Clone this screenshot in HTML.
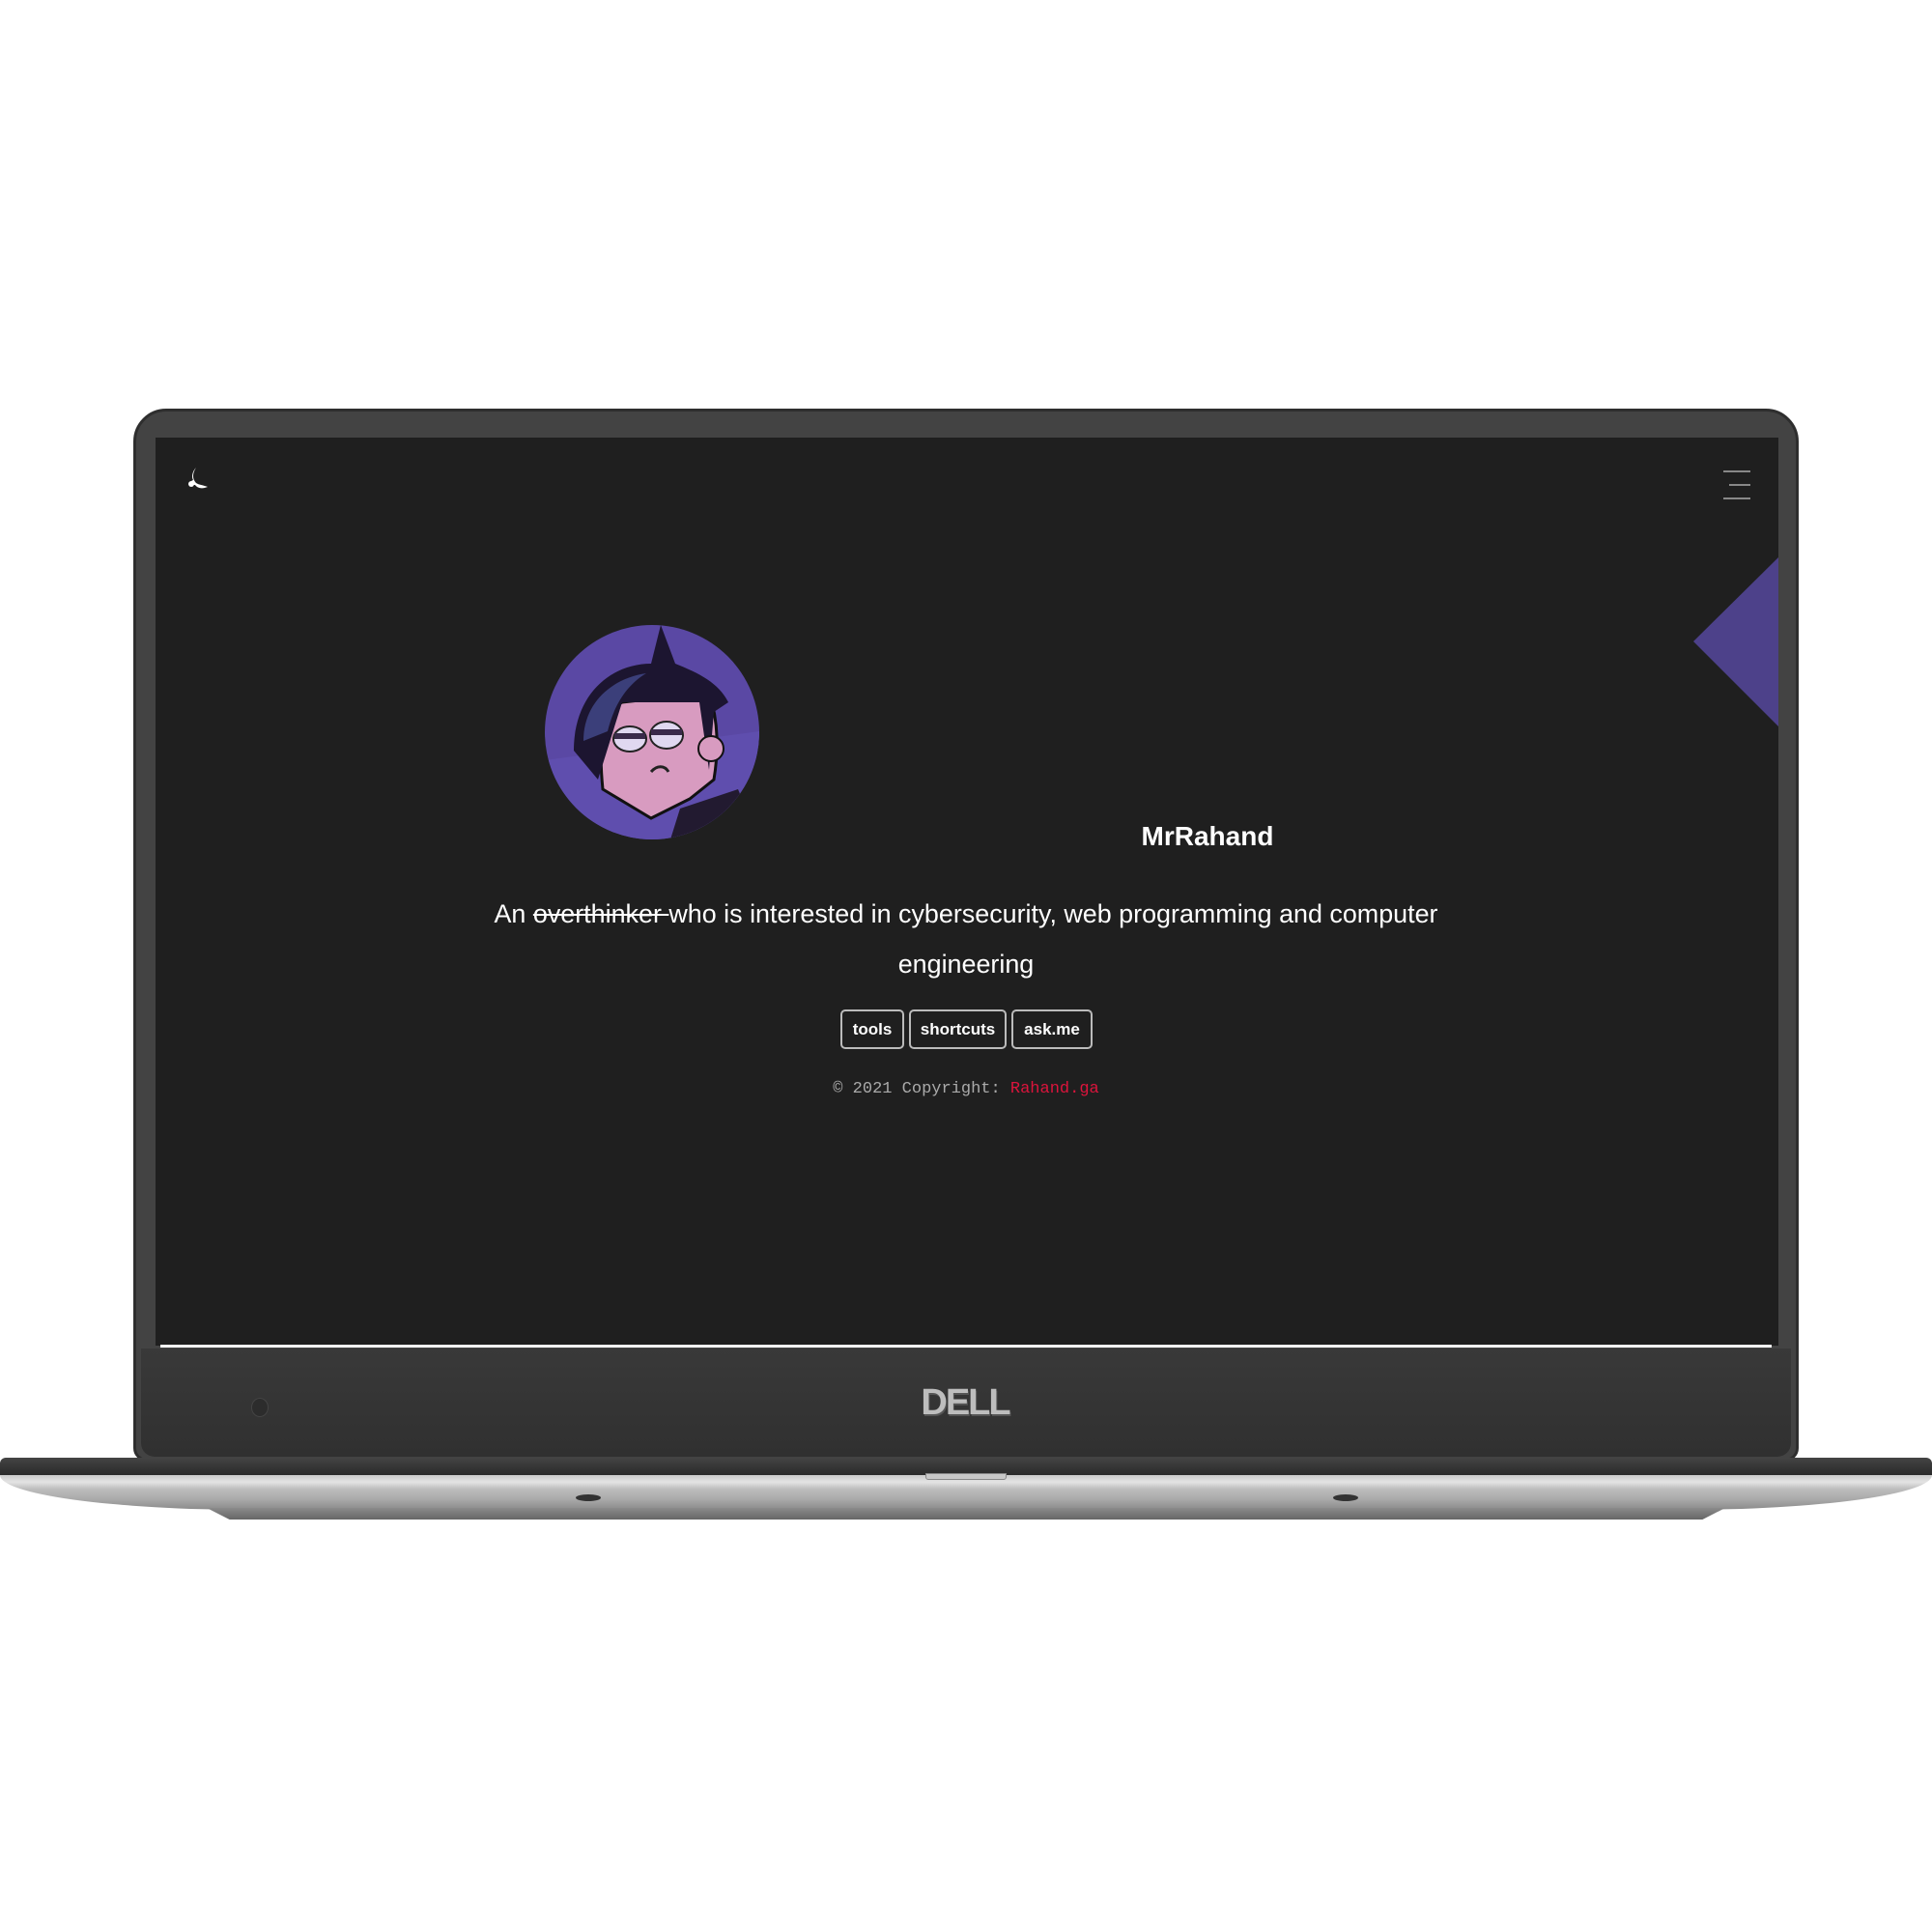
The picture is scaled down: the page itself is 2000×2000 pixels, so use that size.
<!DOCTYPE html>
<html><head><meta charset="utf-8"><style>
*{margin:0;padding:0;box-sizing:border-box}
body{width:2000px;height:2000px;background:#fff;position:relative;overflow:hidden;font-family:"Liberation Sans","DejaVu Sans",sans-serif}
.abs{position:absolute}
#lid{left:138px;top:423px;width:1724px;height:1090px;border-radius:34px 34px 14px 14px;background:#434343;border:3px solid #2e2e2e}
#scr{left:161px;top:453px;width:1680px;height:940px;background:#1f1f1f}
#bez{left:146px;top:1396px;width:1708px;height:112px;background:linear-gradient(#393939,#303030);border-radius:0 0 14px 14px}
#line{left:166px;top:1392px;width:1668px;height:3px;background:#f4f4f4}
#base1{left:0;top:1509px;width:2000px;height:18px;background:linear-gradient(#444,#2a2a2a);border-radius:6px 6px 0 0}
#base2{left:0;top:1527px;width:2000px;height:36px;background:linear-gradient(#c9c9c9,#e4e4e4 20%,#bdbdbd 40%,#a9a9a9 70%,#8a8a8a);border-radius:0 0 260px 260px/0 0 36px 36px}
#foot{left:214px;top:1561px;width:1572px;height:12px;background:linear-gradient(#8a8a8a,#666);clip-path:polygon(0 0,100% 0,98.5% 100%,1.5% 100%)}
.t{color:#fff;text-align:center;white-space:nowrap}
.btn{position:absolute;top:1045px;height:41px;border:2px solid #bbb;border-radius:5px;color:#fff;font-weight:bold;font-size:17px;line-height:37px;text-align:center}
</style></head><body>
<div id="lid" class="abs"></div>
<div id="scr" class="abs"></div>
<div id="bez" class="abs"></div>
<div id="line" class="abs"></div>
<div id="base1" class="abs"></div>
<div id="base2" class="abs"></div>
<div id="foot" class="abs"></div>
<div class="abs" style="left:958px;top:1525px;width:84px;height:7px;background:#c8c8c8;border:1px solid #888;border-radius:0 0 3px 3px"></div>
<div class="abs" style="left:596px;top:1547px;width:26px;height:7px;border-radius:50%;background:#333"></div>
<div class="abs" style="left:1380px;top:1547px;width:26px;height:7px;border-radius:50%;background:#333"></div>
<div class="abs" style="left:260px;top:1447px;width:18px;height:20px;border-radius:50%;background:#2c2c2c;border:1px solid #444"></div>
<div class="abs" style="left:944px;top:1434px;width:110px;text-align:center;font:bold 38px/36px 'Liberation Sans',sans-serif;color:#bdbdbd;letter-spacing:-2px;text-shadow:1px 2px 0 #555">DELL</div>
<svg class="abs" style="left:193px;top:482px" width="24" height="26" viewBox="0 0 24 26"><path d="M10 2 C6 8 6 14 10 18 C13 20 17 20 22 22 C17 24 12 24 9 20 L6 20 C4 18 4 16 7 15 C5 12 6 6 10 2Z" fill="#fff"/><circle cx="5" cy="19" r="3" fill="#fff"/></svg>
<div class="abs" style="left:1784px;top:487px;width:28px;height:2px;background:#888"></div>
<div class="abs" style="left:1790px;top:501px;width:22px;height:2px;background:#888"></div>
<div class="abs" style="left:1784px;top:515px;width:28px;height:2px;background:#888"></div>
<svg class="abs" style="left:1753px;top:577px" width="88" height="175"><polygon points="88,0 0,87 88,175" fill="#4d418a"/></svg>
<svg class="abs" style="left:564px;top:647px" width="222" height="222" viewBox="0 0 222 222">
<defs><clipPath id="c"><circle cx="111" cy="111" r="111"/></clipPath></defs>
<g clip-path="url(#c)">
<rect width="222" height="222" fill="#5a48a4"/>
<path d="M0 140 L222 110 L222 222 L0 222Z" fill="#5f4eae"/>
<path d="M60 170 C55 120 60 90 80 80 L170 70 C180 100 180 130 175 160 L150 180 L110 200 Z" fill="#d89bc0" stroke="#111" stroke-width="3"/>
<path d="M30 130 C30 70 70 40 110 40 L120 0 L135 40 C160 50 180 60 190 80 L175 90 L170 150 L160 80 L80 80 L55 160Z" fill="#1c1530"/>
<path d="M40 120 C40 80 70 55 105 50 C80 65 70 90 65 110Z" fill="#3b3f7a"/>
<ellipse cx="88" cy="118" rx="17" ry="13" fill="#e0d8f0" stroke="#222" stroke-width="2"/>
<ellipse cx="126" cy="114" rx="17" ry="14" fill="#e0d8f0" stroke="#222" stroke-width="2"/>
<path d="M72 112 L104 112 L104 118 L72 118Z" fill="#3a2a4a"/>
<path d="M110 108 L142 108 L142 114 L110 114Z" fill="#3a2a4a"/>
<path d="M110 152 C116 145 124 145 128 152" stroke="#222" stroke-width="3" fill="none"/>
<circle cx="172" cy="128" r="13" fill="#d89bc0" stroke="#111" stroke-width="2"/>
<path d="M140 190 L200 170 L222 222 L130 222Z" fill="#221a30"/>
</g></svg>
<div class="abs t" style="left:1100px;top:848px;width:300px;font-weight:bold;font-size:28px;line-height:36px">MrRahand</div>
<div class="abs t" style="left:400px;top:920px;width:1200px;font-size:26.9px;line-height:52px">An <s>overthinker </s>who is interested in cybersecurity, web programming and computer<br>engineering</div>
<div class="btn" style="left:870px;width:66px">tools</div>
<div class="btn" style="left:941px;width:101px">shortcuts</div>
<div class="btn" style="left:1047px;width:84px">ask.me</div>
<div class="abs t" style="left:700px;top:1116px;width:600px;font:17px/24px 'Liberation Mono',monospace;color:#aaa">© 2021 Copyright: <span style="color:#dc143c">Rahand.ga</span></div>
</body></html>
